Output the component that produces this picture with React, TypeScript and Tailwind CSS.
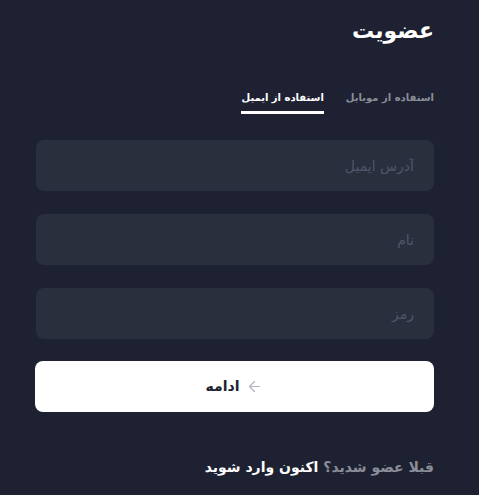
import { ArrowLeft } from "lucide-react";

const fieldClass =
  "h-[51px] w-full rounded-lg bg-[#2a2f3e] px-5 text-right text-[14px] text-gray-200 outline-none placeholder:text-[#50556a]";

export default function App() {
  return (
    <div
      dir="rtl"
      className="min-h-[495px] w-full bg-[#1d2131] pr-[45px] pl-[36px] pt-[17px] font-['DejaVu_Sans',sans-serif]"
    >
      <h1 className="text-[22px] font-bold leading-[28px] text-white">عضویت</h1>

      <div className="mt-[45px] flex items-start gap-[22px]">
        <button type="button" className="pb-2 text-[10px] font-bold text-[#8b8e99]">
          استفاده از موبایل
        </button>
        <button
          type="button"
          className="border-b-[3px] border-white pb-[6px] text-[10px] font-bold text-white"
        >
          استفاده از ایمیل
        </button>
      </div>

      <form className="mt-[26px] flex flex-col gap-[23px]">
        <input type="email" placeholder="آدرس ایمیل" className={fieldClass} />
        <input type="text" placeholder="نام" className={fieldClass} />
        <input type="password" placeholder="رمز" className={fieldClass} />
      </form>

      <button
        type="button"
        className="mt-[22px] -ml-px flex h-[51px] w-[calc(100%+1px)] items-center justify-center gap-[7px] rounded-lg bg-white text-[14px] font-bold text-[#1d2131]"
      >
        <ArrowLeft size={17} strokeWidth={1.75} className="text-[#b3b5bd]" />
        ادامه
      </button>

      <p className="mt-[45px] text-[14px] font-bold text-[#8b8e99]">
        قبلا عضو شدید؟ <span className="text-white">اکنون وارد شوید</span>
      </p>
    </div>
  );
}
